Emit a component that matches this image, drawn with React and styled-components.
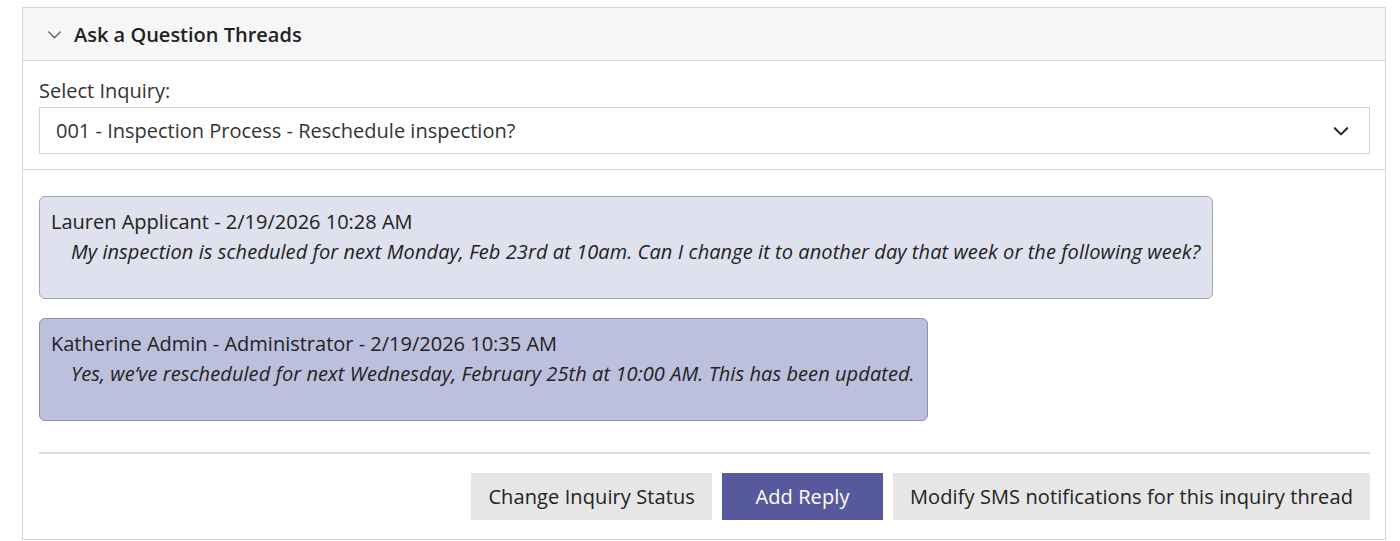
import React from 'react'
import styled, { createGlobalStyle } from 'styled-components'

const GlobalStyle = createGlobalStyle`
  body {
    margin: 0;
    background: #fff;
    font-family: "Open Sans", "Noto Sans", sans-serif;
    color: #222;
  }
`

const messages = [
  {
    id: 1,
    author: 'Lauren Applicant - 2/19/2026 10:28 AM',
    body: 'My inspection is scheduled for next Monday, Feb 23rd at 10am. Can I change it to another day that week or the following week?',
    staff: false,
  },
  {
    id: 2,
    author: 'Katherine Admin - Administrator - 2/19/2026 10:35 AM',
    body: 'Yes, we\u2019ve rescheduled for next Wednesday, February 25th at 10:00 AM. This has been updated.',
    staff: true,
  },
]

function Chevron({ size = 16, color = '#333', weight = 1.4 }) {
  return (
    <svg width={size} height={size} viewBox="0 0 16 16" fill="none">
      <path d="M2.5 5.5 L8 11 L13.5 5.5" stroke={color} strokeWidth={weight} strokeLinecap="round" strokeLinejoin="round" />
    </svg>
  )
}

function App() {
  return (
    <>
      <GlobalStyle />
      <Page>
        <Panel>
          <Header>
            <Chevron size={17} color="#555" weight={1.2} />
            <Title>Ask a Question Threads</Title>
          </Header>

          <SelectSection>
            <Label>Select Inquiry:</Label>
            <SelectBox>
              <span>001 - Inspection Process - Reschedule inspection?</span>
              <Chevron size={18} color="#222" weight={1.8} />
            </SelectBox>
          </SelectSection>

          <ThreadSection>
            {messages.map(m => (
              <Bubble key={m.id} $staff={m.staff}>
                <Author>{m.author}</Author>
                <Body>{m.body}</Body>
              </Bubble>
            ))}

            <Actions>
              <Button>Change Inquiry Status</Button>
              <Button $primary>Add Reply</Button>
              <Button>Modify SMS notifications for this inquiry thread</Button>
            </Actions>
          </ThreadSection>
        </Panel>
      </Page>
    </>
  )
}

export default App

const Page = styled.div`
  padding: 7px 14px 0 22px;
`

const Panel = styled.div`
  border: 1px solid #d6d6d6;
  width: 1364px;
  box-sizing: border-box;
  height: 533px;
`

const Header = styled.div`
  display: flex;
  align-items: center;
  gap: 11px;
  height: 53px;
  padding-left: 23px;
  background: #f6f6f6;
  border-bottom: 1px solid #d6d6d6;
  box-sizing: border-box;
`

const Title = styled.h2`
  margin: 0;
  font-size: 20px;
  font-weight: 600;
  color: #222;
`

const SelectSection = styled.div`
  padding: 17px 15px 15px 16px;
  border-bottom: 1px solid #d6d6d6;
`

const Label = styled.div`
  font-size: 20px;
  line-height: 26px;
  margin-bottom: 3px;
  color: #333;
`

const SelectBox = styled.div`
  display: flex;
  align-items: center;
  justify-content: space-between;
  height: 47px;
  box-sizing: border-box;
  border: 1px solid #d4d4d4;
  padding: 0 19px 0 16px;
  font-size: 20px;
  color: #333;
`

const ThreadSection = styled.div`
  padding: 26px 15px 0 16px;
  display: flex;
  flex-direction: column;
  align-items: flex-start;
`

const Bubble = styled.div`
  box-sizing: border-box;
  min-height: 103px;
  margin-bottom: 19px;
  padding: 11px 12px 0 11px;
  border: 1px solid ${p => (p.$staff ? '#8c8fa8' : '#a3a5b5')};
  border-radius: 6px;
  background: ${p => (p.$staff ? '#bdc0dc' : '#dfe1ee')};
`

const Author = styled.div`
  font-size: 20px;
  line-height: 28px;
  color: #222;
`

const Body = styled.div`
  font-size: 20px;
  line-height: 32px;
  font-style: italic;
  letter-spacing: 0.08px;
  padding-left: 20px;
  color: #222;
`

const Actions = styled.div`
  align-self: stretch;
  display: flex;
  justify-content: flex-end;
  gap: 10px;
  margin-top: 12px;
  padding-top: 19px;
  border-top: 2px solid #dcdcdc;
`

const Button = styled.button`
  height: 47px;
  padding: 0 17px;
  border: none;
  font-family: inherit;
  font-size: 20px;
  letter-spacing: 0.1px;
  color: ${p => (p.$primary ? '#fff' : '#222')};
  background: ${p => (p.$primary ? '#565a9c' : '#e6e6e6')};
  min-width: ${p => (p.$primary ? '161px' : 'auto')};
  cursor: pointer;
`
